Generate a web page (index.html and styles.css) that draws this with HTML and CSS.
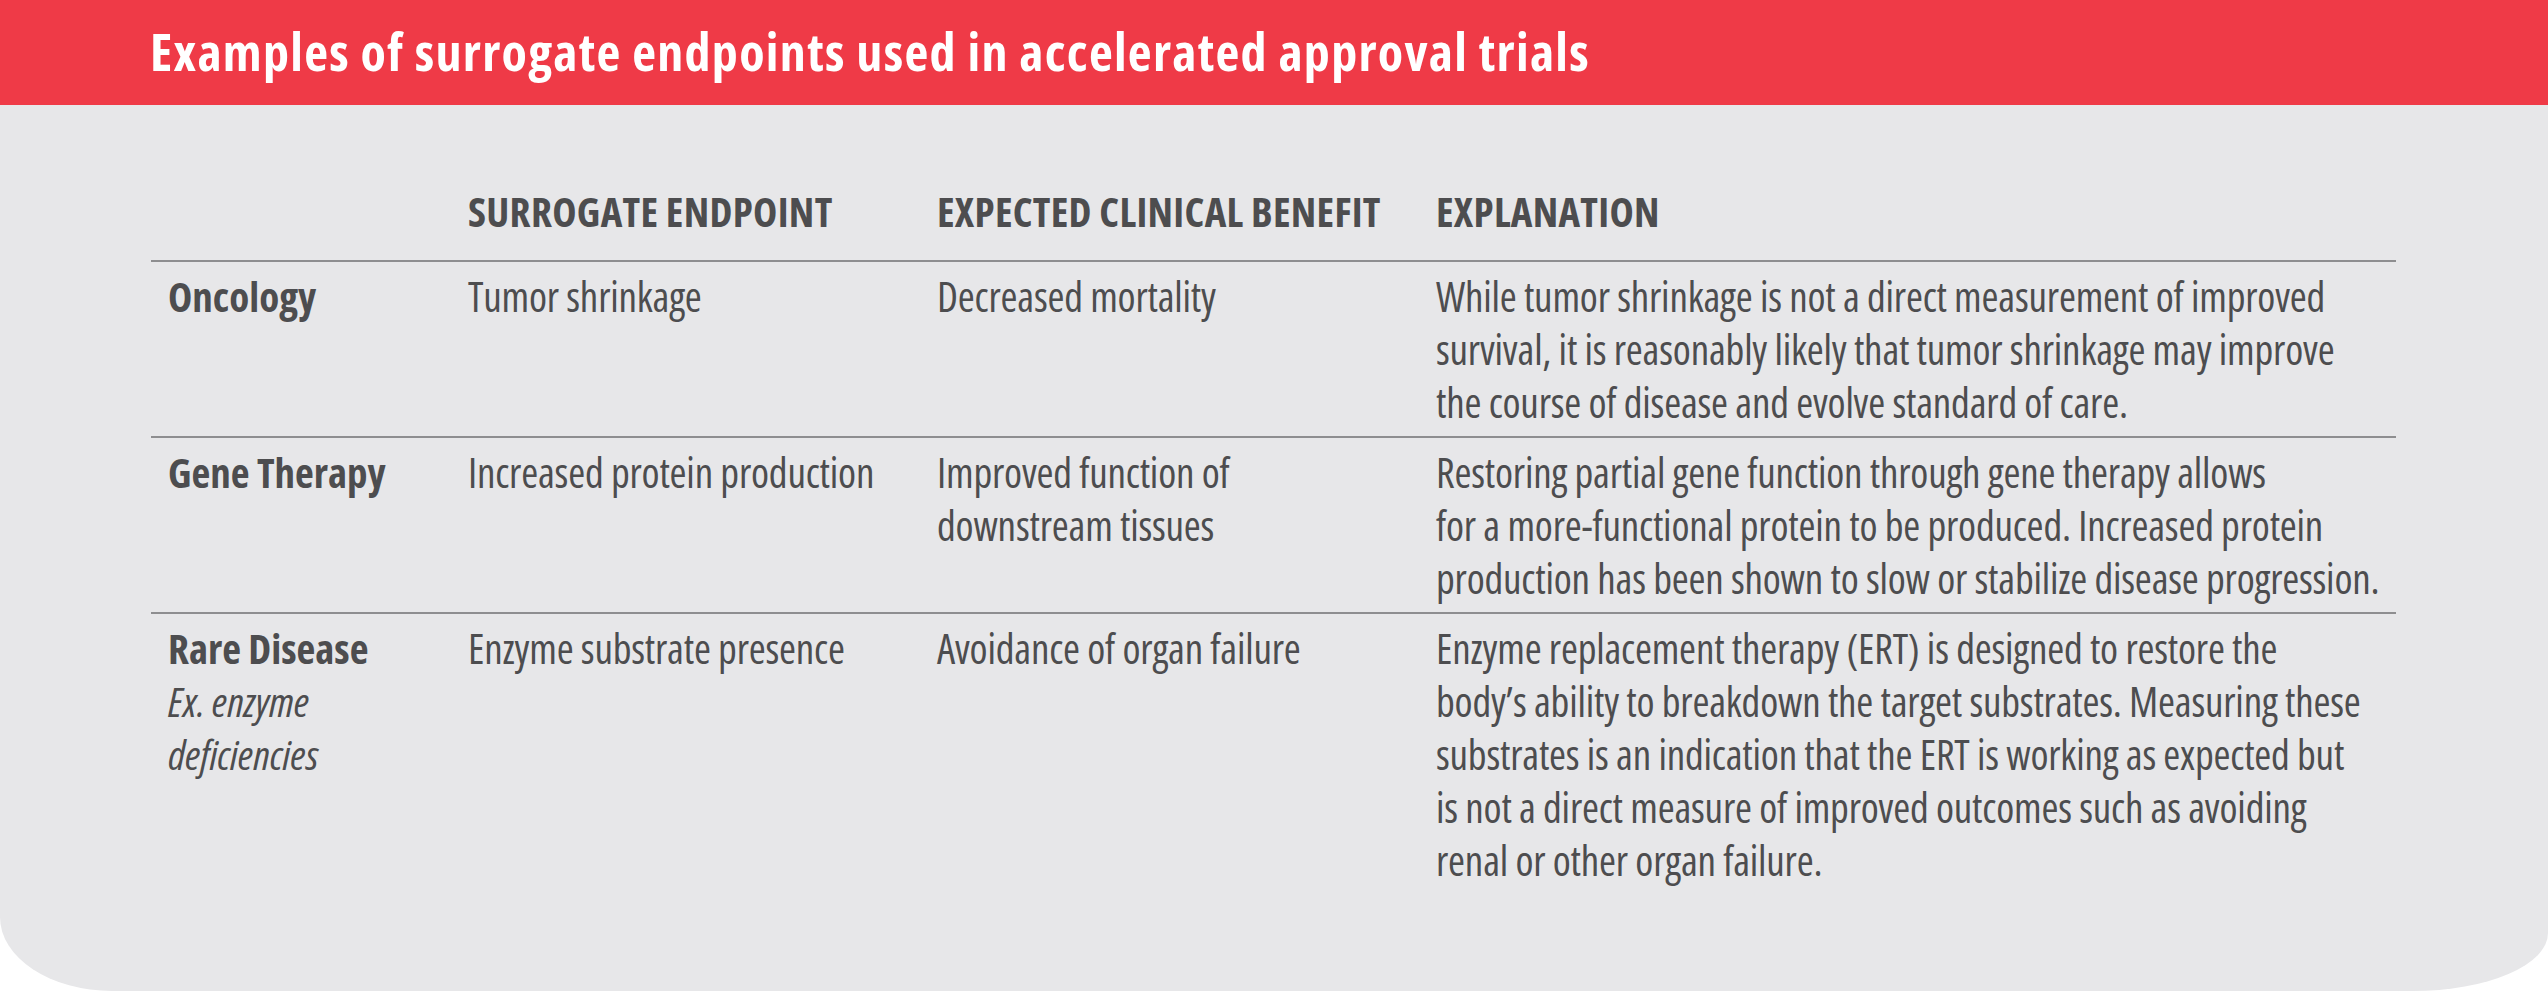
FILE: index.html
```html
<!DOCTYPE html>
<html lang="en">
<head>
<meta charset="utf-8">
<title>Examples of surrogate endpoints used in accelerated approval trials</title>
<link rel="stylesheet" href="styles.css">
</head>
<body>
<div class="card">
  <header class="banner">
    <h1 class="banner-title">Examples of surrogate endpoints used in accelerated approval trials</h1>
  </header>
  <section class="panel">
    <table class="endpoints">
      <colgroup>
        <col class="c-area">
        <col class="c-surrogate">
        <col class="c-benefit">
        <col class="c-explain">
      </colgroup>
      <thead>
        <tr>
          <th></th>
          <th>SURROGATE ENDPOINT</th>
          <th>EXPECTED CLINICAL BENEFIT</th>
          <th>EXPLANATION</th>
        </tr>
      </thead>
      <tbody>
        <tr>
          <td class="area">Oncology</td>
          <td>Tumor shrinkage</td>
          <td>Decreased mortality</td>
          <td>While tumor shrinkage is not a direct measurement of improved<br>survival, it is reasonably likely that tumor shrinkage may improve<br>the course of disease and evolve standard of care.</td>
        </tr>
        <tr>
          <td class="area">Gene Therapy</td>
          <td>Increased protein production</td>
          <td>Improved function of<br>downstream tissues</td>
          <td>Restoring partial gene function through gene therapy allows<br>for a more-functional protein to be produced. Increased protein<br>production has been shown to slow or stabilize disease progression.</td>
        </tr>
        <tr class="last">
          <td class="area">Rare Disease<br><span class="example">Ex. enzyme<br>deficiencies</span></td>
          <td>Enzyme substrate presence</td>
          <td>Avoidance of organ failure</td>
          <td>Enzyme replacement therapy (ERT) is designed to restore the<br>body’s ability to breakdown the target substrates. Measuring these<br>substrates is an indication that the ERT is working as expected but<br>is not a direct measure of improved outcomes such as avoiding<br>renal or other organ failure.</td>
        </tr>
      </tbody>
    </table>
  </section>
</div>
</body>
</html>
```
FILE: styles.css
```css
html, body {
  margin: 0;
  padding: 0;
  background: #ffffff;
}

body {
  font-family: "Open Sans", "Liberation Sans", sans-serif;
  font-stretch: 75%;
  color: #4d4d4f;
}

.card {
  width: 2548px;
  display: flex;
  flex-direction: column;
}

.banner {
  height: 105px;
  background: #ef3a47;
  display: flex;
  align-items: center;
  padding: 0 150px 3px;
  box-sizing: border-box;
}

.banner-title {
  margin: 0;
  font-size: 52px;
  line-height: 52px;
  font-weight: 700;
  color: #ffffff;
  letter-spacing: 1.3px;
}

.panel {
  height: 886px;
  background: #e7e7e9;
  border-bottom-left-radius: 112px 74px;
  border-bottom-right-radius: 135px 58px;
  padding: 80px 0 0 151px;
  box-sizing: border-box;
}

.endpoints {
  border-collapse: collapse;
  table-layout: fixed;
  width: 2245px;
  font-size: 41px;
  line-height: 53px;
}

.c-area { width: 300px; }
.c-surrogate { width: 469px; }
.c-benefit { width: 499px; }
.c-explain { width: 977px; }

.endpoints th,
.endpoints td {
  text-align: left;
  vertical-align: top;
  padding: 8px 0 7px 17px;
  white-space: nowrap;
}

.endpoints th {
  font-weight: 700;
  padding-top: 0;
  padding-bottom: 22px;
  letter-spacing: 0.3px;
}

.endpoints thead tr,
.endpoints tbody tr {
  border-bottom: 2px solid #8e8e90;
}

.endpoints tbody tr.last {
  border-bottom: none;
}

.endpoints td {
  font-weight: 400;
  letter-spacing: -0.2px;
}

.endpoints td.area {
  font-weight: 700;
  letter-spacing: 0;
}

.example {
  font-weight: 400;
  font-style: italic;
}
```
